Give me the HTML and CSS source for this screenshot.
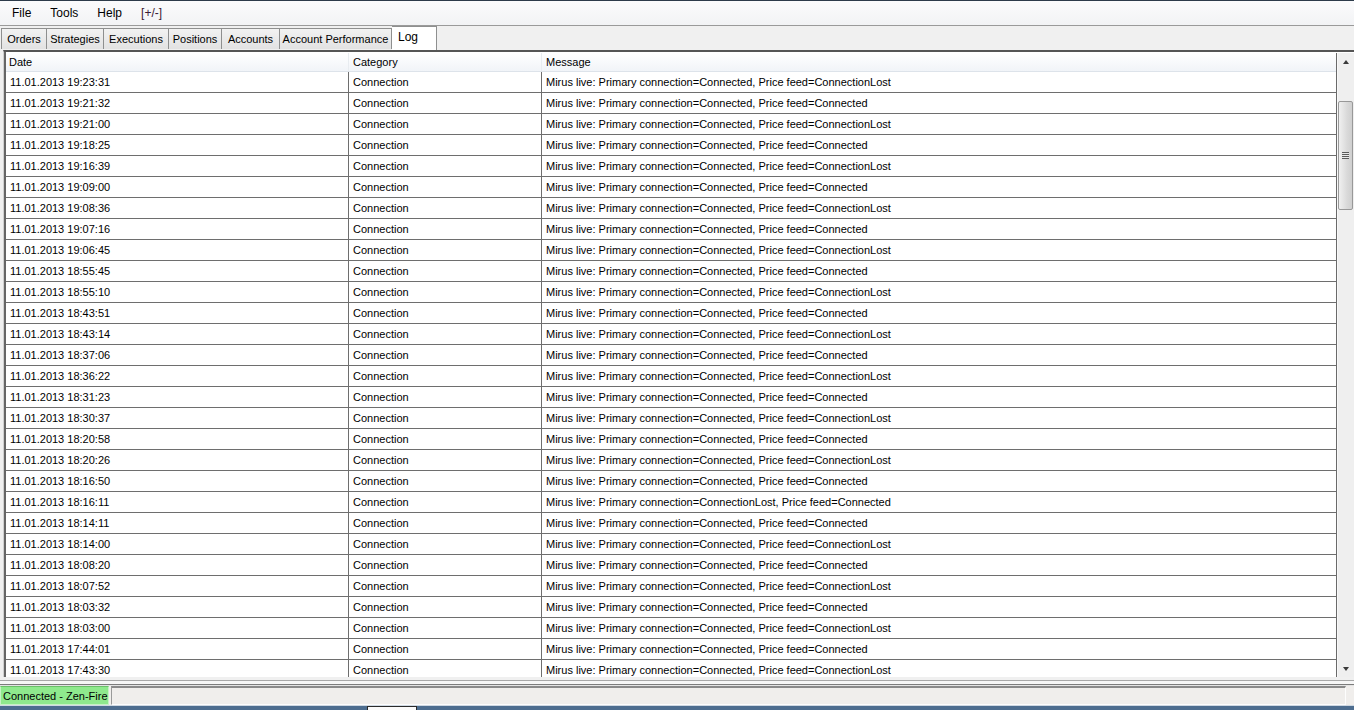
FILE: index.html
```html
<!DOCTYPE html>
<html lang="en">
  <head>
    <meta charset="UTF-8" />
    <title>Control Center - Log</title>
    <link rel="stylesheet" href="styles.css">
  </head>
  <body>
    <div class="menubar">
      <span class="menu-item">File</span>
      <span class="menu-item">Tools</span>
      <span class="menu-item">Help</span>
      <span class="menu-item toggle">[+/-]</span>
    </div>

    <div class="tabstrip">
      <div class="tab">Orders</div>
      <div class="tab">Strategies</div>
      <div class="tab">Executions</div>
      <div class="tab">Positions</div>
      <div class="tab">Accounts</div>
      <div class="tab">Account Performance</div>
      <div class="tab active">Log</div>
    </div>

    <div class="grid">
      <div class="table">
        <div class="row head">
          <div class="cell">Date</div>
          <div class="cell">Category</div>
          <div class="cell">Message</div>
        </div>
        <div class="rows">
          <div class="row"><div class="cell">11.01.2013 19:23:31</div><div class="cell">Connection</div><div class="cell">Mirus live: Primary connection=Connected, Price feed=ConnectionLost</div></div>
          <div class="row"><div class="cell">11.01.2013 19:21:32</div><div class="cell">Connection</div><div class="cell">Mirus live: Primary connection=Connected, Price feed=Connected</div></div>
          <div class="row"><div class="cell">11.01.2013 19:21:00</div><div class="cell">Connection</div><div class="cell">Mirus live: Primary connection=Connected, Price feed=ConnectionLost</div></div>
          <div class="row"><div class="cell">11.01.2013 19:18:25</div><div class="cell">Connection</div><div class="cell">Mirus live: Primary connection=Connected, Price feed=Connected</div></div>
          <div class="row"><div class="cell">11.01.2013 19:16:39</div><div class="cell">Connection</div><div class="cell">Mirus live: Primary connection=Connected, Price feed=ConnectionLost</div></div>
          <div class="row"><div class="cell">11.01.2013 19:09:00</div><div class="cell">Connection</div><div class="cell">Mirus live: Primary connection=Connected, Price feed=Connected</div></div>
          <div class="row"><div class="cell">11.01.2013 19:08:36</div><div class="cell">Connection</div><div class="cell">Mirus live: Primary connection=Connected, Price feed=ConnectionLost</div></div>
          <div class="row"><div class="cell">11.01.2013 19:07:16</div><div class="cell">Connection</div><div class="cell">Mirus live: Primary connection=Connected, Price feed=Connected</div></div>
          <div class="row"><div class="cell">11.01.2013 19:06:45</div><div class="cell">Connection</div><div class="cell">Mirus live: Primary connection=Connected, Price feed=ConnectionLost</div></div>
          <div class="row"><div class="cell">11.01.2013 18:55:45</div><div class="cell">Connection</div><div class="cell">Mirus live: Primary connection=Connected, Price feed=Connected</div></div>
          <div class="row"><div class="cell">11.01.2013 18:55:10</div><div class="cell">Connection</div><div class="cell">Mirus live: Primary connection=Connected, Price feed=ConnectionLost</div></div>
          <div class="row"><div class="cell">11.01.2013 18:43:51</div><div class="cell">Connection</div><div class="cell">Mirus live: Primary connection=Connected, Price feed=Connected</div></div>
          <div class="row"><div class="cell">11.01.2013 18:43:14</div><div class="cell">Connection</div><div class="cell">Mirus live: Primary connection=Connected, Price feed=ConnectionLost</div></div>
          <div class="row"><div class="cell">11.01.2013 18:37:06</div><div class="cell">Connection</div><div class="cell">Mirus live: Primary connection=Connected, Price feed=Connected</div></div>
          <div class="row"><div class="cell">11.01.2013 18:36:22</div><div class="cell">Connection</div><div class="cell">Mirus live: Primary connection=Connected, Price feed=ConnectionLost</div></div>
          <div class="row"><div class="cell">11.01.2013 18:31:23</div><div class="cell">Connection</div><div class="cell">Mirus live: Primary connection=Connected, Price feed=Connected</div></div>
          <div class="row"><div class="cell">11.01.2013 18:30:37</div><div class="cell">Connection</div><div class="cell">Mirus live: Primary connection=Connected, Price feed=ConnectionLost</div></div>
          <div class="row"><div class="cell">11.01.2013 18:20:58</div><div class="cell">Connection</div><div class="cell">Mirus live: Primary connection=Connected, Price feed=Connected</div></div>
          <div class="row"><div class="cell">11.01.2013 18:20:26</div><div class="cell">Connection</div><div class="cell">Mirus live: Primary connection=Connected, Price feed=ConnectionLost</div></div>
          <div class="row"><div class="cell">11.01.2013 18:16:50</div><div class="cell">Connection</div><div class="cell">Mirus live: Primary connection=Connected, Price feed=Connected</div></div>
          <div class="row"><div class="cell">11.01.2013 18:16:11</div><div class="cell">Connection</div><div class="cell">Mirus live: Primary connection=ConnectionLost, Price feed=Connected</div></div>
          <div class="row"><div class="cell">11.01.2013 18:14:11</div><div class="cell">Connection</div><div class="cell">Mirus live: Primary connection=Connected, Price feed=Connected</div></div>
          <div class="row"><div class="cell">11.01.2013 18:14:00</div><div class="cell">Connection</div><div class="cell">Mirus live: Primary connection=Connected, Price feed=ConnectionLost</div></div>
          <div class="row"><div class="cell">11.01.2013 18:08:20</div><div class="cell">Connection</div><div class="cell">Mirus live: Primary connection=Connected, Price feed=Connected</div></div>
          <div class="row"><div class="cell">11.01.2013 18:07:52</div><div class="cell">Connection</div><div class="cell">Mirus live: Primary connection=Connected, Price feed=ConnectionLost</div></div>
          <div class="row"><div class="cell">11.01.2013 18:03:32</div><div class="cell">Connection</div><div class="cell">Mirus live: Primary connection=Connected, Price feed=Connected</div></div>
          <div class="row"><div class="cell">11.01.2013 18:03:00</div><div class="cell">Connection</div><div class="cell">Mirus live: Primary connection=Connected, Price feed=ConnectionLost</div></div>
          <div class="row"><div class="cell">11.01.2013 17:44:01</div><div class="cell">Connection</div><div class="cell">Mirus live: Primary connection=Connected, Price feed=Connected</div></div>
          <div class="row"><div class="cell">11.01.2013 17:43:30</div><div class="cell">Connection</div><div class="cell">Mirus live: Primary connection=Connected, Price feed=ConnectionLost</div></div>
        </div>
      </div>
      <div class="vscroll">
        <div class="arrow up"></div>
        <div class="track">
          <div class="thumb"><span class="grip"></span></div>
        </div>
        <div class="arrow down"></div>
      </div>
    </div>

    <div class="splitter"></div>

    <div class="statusbar">
      <div class="status-ok">Connected - Zen-Fire</div>
      <div class="status-rest"></div>
    </div>

    <div class="taskbar">
      <div class="task"></div>
    </div>
  </body>
</html>
```

FILE: styles.css
```css
* {
  margin: 0;
  padding: 0;
  box-sizing: border-box;
}

body {
  font-family: "Liberation Sans", Arial, sans-serif;
  font-size: 11px;
  color: #000;
  background-color: #f0f0f0;
  width: 1354px;
  height: 710px;
  overflow: hidden;
  display: flex;
  flex-direction: column;
}

/* Menu bar */
.menubar {
  height: 26px;
  flex: none;
  display: flex;
  align-items: center;
  padding-left: 3px;
  background: linear-gradient(#fbfbfc, #f2f3f5);
  border-top: 1px solid #2d3b4a;
  border-bottom: 1px solid #9a9a9a;
  font-size: 12px;
}

.menu-item {
  padding: 0 9px;
  margin-right: 1px;
}

.menu-item.toggle {
  color: #3a1a34;
}

/* Tabs */
.tabstrip {
  height: 24px;
  flex: none;
  display: flex;
  align-items: flex-end;
  padding-left: 1px;
  background-color: #f0f0f0;
}

.tab {
  height: 21px;
  padding-top: 4px;
  margin-bottom: 1px;
  border: 1px solid #8e8f8f;
  border-bottom: none;
  border-right: none;
  background: linear-gradient(#f2f2f2, #e2e2e2);
  text-align: center;
  white-space: nowrap;
}

.tab:nth-child(1) { width: 45px; }
.tab:nth-child(2) { width: 57px; }
.tab:nth-child(3) { width: 65px; }
.tab:nth-child(4) { width: 53px; }
.tab:nth-child(5) { width: 58px; }

.tab:nth-child(6) {
  width: 113px;
  border-right: 1px solid #8e8f8f;
}

.tab.active {
  width: 45px;
  height: 24px;
  margin-bottom: 0;
  padding: 3px 0 0 6px;
  text-align: left;
  background: #fff;
  border-left: none;
  border-right: 1px solid #8e8f8f;
  font-size: 12px;
}

/* Log grid */
.grid {
  height: 627px;
  flex: none;
  display: flex;
  margin-left: 3px;
  background-color: #fff;
  border-top: 2px solid #555;
  border-left: 1px solid #d0d0d0;
  box-shadow: inset 2px 0 0 #666;
  padding-left: 2px;
  padding-top: 1px;
}

.table {
  flex: 1;
  display: flex;
  flex-direction: column;
  overflow: hidden;
  border-right: 1px solid #6a6a6a;
}

.row {
  display: grid;
  grid-template-columns: 342px 193px 1fr;
  height: 21px;
  flex: none;
  border-bottom: 1px solid #6e6e6e;
}

.row .cell {
  line-height: 21px;
  padding-left: 4px;
  white-space: nowrap;
  overflow: hidden;
}

.row .cell + .cell {
  border-left: 1px solid #6e6e6e;
}

.row.head {
  height: 19px;
  background: linear-gradient(#ffffff, #f1f4f8);
  border-bottom: 1px solid #dde3ea;
}

.row.head .cell {
  line-height: 19px;
  padding-left: 3px;
}

.row.head .cell + .cell {
  border-left: 1px solid #e8ecf0;
  padding-left: 4px;
}

.rows {
  flex: 1;
  overflow: hidden;
}

/* Scrollbar */
.vscroll {
  width: 17px;
  flex: none;
  display: flex;
  flex-direction: column;
  background-color: #efefef;
  border-left: 1px solid #f8f8f8;
}

.arrow {
  height: 17px;
  display: flex;
  align-items: center;
  justify-content: center;
}

.arrow::before {
  content: "";
  border-left: 3px solid transparent;
  border-right: 3px solid transparent;
}

.arrow.up::before {
  border-bottom: 4px solid #3a3a3a;
}

.arrow.down::before {
  border-top: 4px solid #3a3a3a;
}

.track {
  flex: 1;
  padding-top: 31px;
}

.thumb {
  height: 109px;
  margin: 0 1px 0 0;
  border: 1px solid #989898;
  border-radius: 2px;
  background: linear-gradient(90deg, #f0f0f0, #dadada 60%, #cfcfcf);
  display: flex;
  align-items: center;
  justify-content: center;
}

.grip {
  width: 7px;
  height: 7px;
  background: repeating-linear-gradient(#5a5a5a 0 1px, #e8e8e8 1px 2px);
}

/* Splitter lines under the grid */
.splitter {
  height: 9px;
  flex: none;
  background:
    linear-gradient(#f0f0f0 0 3px, #a8a8a8 3px 4px, #f6f6f6 4px 7px, #7c7c7c 7px 8px, #e4e4e4 8px);
}

/* Status bar */
.statusbar {
  height: 19px;
  flex: none;
  display: flex;
  gap: 2px;
  padding-right: 8px;
  background-color: #f0eeec;
}

.status-ok {
  width: 109px;
  padding-left: 2px;
  line-height: 19px;
  background-color: #8fe98d;
  border: 1px solid #c6f2c4;
  border-top-color: #6bc06a;
  white-space: nowrap;
  overflow: hidden;
}

.status-rest {
  flex: 1;
  border: 1px solid #fdfdfd;
  border-top: 2px solid #8a8a8a;
  border-left: 1px solid #9a9a9a;
}

/* Desktop taskbar edge */
.taskbar {
  height: 5px;
  flex: none;
  background: linear-gradient(#cfd8e2 0 1px, #4d6d8f 1px);
  position: relative;
}

.task {
  position: absolute;
  left: 367px;
  top: 1px;
  width: 50px;
  height: 4px;
  background-color: #fafafa;
  border: 1px solid #2a2a2a;
  border-bottom: none;
}
```
